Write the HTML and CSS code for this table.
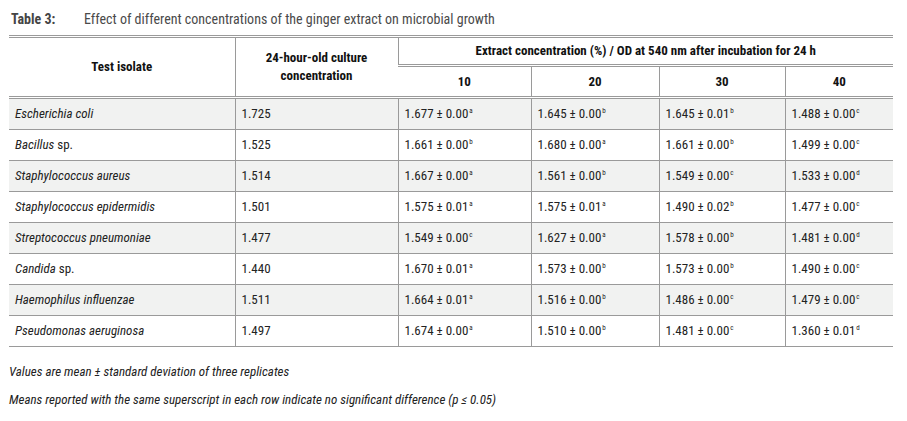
FILE: index.html
```html
<!DOCTYPE html>
<html>
<head>
<meta charset="utf-8">
<link rel="stylesheet" href="styles.css">
</head>
<body>
<div class="page">
  <div class="caption"><span class="label">Table 3:</span><span class="title">Effect of different concentrations of the ginger extract on microbial growth</span></div>
  <table class="data">
    <colgroup>
      <col class="c1"><col class="c2"><col class="c3"><col class="c4"><col class="c5"><col class="c6">
    </colgroup>
    <thead>
      <tr class="h1">
        <th rowspan="2">Test isolate</th>
        <th rowspan="2" class="wrap">24-hour-old culture<br>concentration</th>
        <th colspan="4" class="ext">Extract concentration (%) / OD at 540 nm after incubation for 24 h</th>
      </tr>
      <tr class="h2">
        <th class="sub">10</th><th class="sub">20</th><th class="sub">30</th><th class="sub">40</th>
      </tr>
    </thead>
    <tbody>
      <tr class="shade"><td><i>Escherichia coli</i></td><td>1.725</td><td>1.677 ± 0.00<sup>a</sup></td><td>1.645 ± 0.00<sup>b</sup></td><td>1.645 ± 0.01<sup>b</sup></td><td>1.488 ± 0.00<sup>c</sup></td></tr>
      <tr><td><i>Bacillus</i> sp.</td><td>1.525</td><td>1.661 ± 0.00<sup>b</sup></td><td>1.680 ± 0.00<sup>a</sup></td><td>1.661 ± 0.00<sup>b</sup></td><td>1.499 ± 0.00<sup>c</sup></td></tr>
      <tr class="shade"><td><i>Staphylococcus aureus</i></td><td>1.514</td><td>1.667 ± 0.00<sup>a</sup></td><td>1.561 ± 0.00<sup>b</sup></td><td>1.549 ± 0.00<sup>c</sup></td><td>1.533 ± 0.00<sup>d</sup></td></tr>
      <tr><td><i>Staphylococcus epidermidis</i></td><td>1.501</td><td>1.575 ± 0.01<sup>a</sup></td><td>1.575 ± 0.01<sup>a</sup></td><td>1.490 ± 0.02<sup>b</sup></td><td>1.477 ± 0.00<sup>c</sup></td></tr>
      <tr class="shade"><td><i>Streptococcus pneumoniae</i></td><td>1.477</td><td>1.549 ± 0.00<sup>c</sup></td><td>1.627 ± 0.00<sup>a</sup></td><td>1.578 ± 0.00<sup>b</sup></td><td>1.481 ± 0.00<sup>d</sup></td></tr>
      <tr><td><i>Candida</i> sp.</td><td>1.440</td><td>1.670 ± 0.01<sup>a</sup></td><td>1.573 ± 0.00<sup>b</sup></td><td>1.573 ± 0.00<sup>b</sup></td><td>1.490 ± 0.00<sup>c</sup></td></tr>
      <tr class="shade"><td><i>Haemophilus influenzae</i></td><td>1.511</td><td>1.664 ± 0.01<sup>a</sup></td><td>1.516 ± 0.00<sup>b</sup></td><td>1.486 ± 0.00<sup>c</sup></td><td>1.479 ± 0.00<sup>c</sup></td></tr>
      <tr><td><i>Pseudomonas aeruginosa</i></td><td>1.497</td><td>1.674 ± 0.00<sup>a</sup></td><td>1.510 ± 0.00<sup>b</sup></td><td>1.481 ± 0.00<sup>c</sup></td><td>1.360 ± 0.01<sup>d</sup></td></tr>
    </tbody>
  </table>
  <p class="note">Values are mean ± standard deviation of three replicates</p>
  <p class="note">Means reported with the same superscript in each row indicate no significant difference (<i>p</i> ≤ 0.05)</p>
</div>
</body>
</html>
```

FILE: styles.css
```css
html, body {
  margin: 0;
  padding: 0;
  background: #ffffff;
}
body {
  font-family: "Liberation Sans Narrow", "Roboto Condensed", "Liberation Sans", Arial, sans-serif;
  color: #1f1f1f;
}
.page {
  padding: 0 14px 0 9px;
}
.caption {
  display: flex;
  align-items: baseline;
  height: 35px;
  padding-top: 11px;
  box-sizing: border-box;
  font-size: 14px;
  line-height: 16px;
  color: #4a4a4a;
}
.caption .label {
  font-weight: bold;
  width: 73px;
  padding-left: 2px;
  color: #454545;
}
.data {
  width: 884px;
  border-collapse: collapse;
  table-layout: fixed;
  font-size: 13px;
}
.c1 { width: 226px; }
.c2 { width: 163px; }
.c3 { width: 133px; }
.c4 { width: 128px; }
.c5 { width: 126px; }
.c6 { width: 108px; }
.data th {
  font-weight: bold;
  color: #111;
  text-align: center;
  padding: 0 4px;
  border-left: 1px solid #9a9a9a;
  font-size: 13px;
  line-height: 18px;
}
.data th:first-child { border-left: none; }
.h1 th {
  border-top: 3px double #9a9a9a;
  border-bottom: 3px double #9a9a9a;
}
.h1 { height: 29px; }
.h2 { height: 32px; }
.h2 th { border-bottom: 3px double #9a9a9a; }
.data td {
  height: 30px;
  padding: 0 5px 0 6px;
  border-left: 1px solid #9a9a9a;
  border-bottom: 1px solid #9a9a9a;
  white-space: nowrap;
  line-height: 16px;
  color: #222;
}
.data td:first-child { border-left: none; padding-left: 6px; }
.shade td { background: #f1f2f1; }
sup {
  font-size: 7px;
  vertical-align: 5px;
  line-height: 0;
  margin-left: 1px;
}
.note {
  margin: 0;
  font-style: italic;
  font-size: 13px;
  color: #222;
  line-height: 16px;
}
.note:first-of-type { margin-top: 17px; }
.note + .note { margin-top: 12px; }
```
